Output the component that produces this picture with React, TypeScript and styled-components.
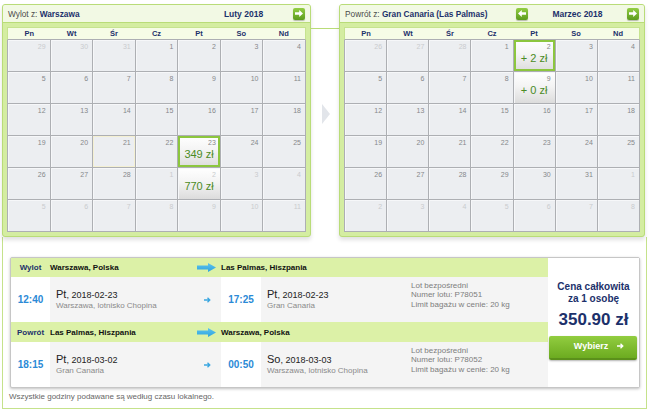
import React from "react";
import styled, { createGlobalStyle, css } from "styled-components";

const NAVY = "#1c316b";
const FRAME = "#b9dc78";
const GRID_LINE = "#adafb3";

const GlobalStyle = createGlobalStyle`
  html, body { margin: 0; padding: 0; background: #fff; }
  body { font-family: "Liberation Sans", Arial, sans-serif; }
  * { box-sizing: border-box; }
`;

interface Day {
  n: number;
  muted?: boolean;
  price?: string;
  selected?: boolean;
  today?: boolean;
}

// 42 pól: koniec poprzedniego miesiąca, bieżący, początek następnego
const buildMonth = (prevTail: number[], days: number): Day[] => {
  const list: Day[] = prevTail.map((n) => ({ n, muted: true }));
  for (let i = 1; i <= days; i++) list.push({ n: i });
  let next = 1;
  while (list.length < 42) list.push({ n: next++, muted: true });
  return list;
};

const febDays = buildMonth([29, 30, 31], 28).map((d, i) => {
  if (!d.muted && d.n === 21) return { ...d, today: true };
  if (!d.muted && d.n === 23) return { ...d, price: "349 zł", selected: true };
  if (d.muted && i > 20 && d.n === 2) return { ...d, price: "770 zł" };
  return d;
});

const marDays = buildMonth([26, 27, 28], 31).map((d) => {
  if (!d.muted && d.n === 2) return { ...d, price: "+ 2 zł", selected: true };
  if (!d.muted && d.n === 9) return { ...d, price: "+ 0 zł" };
  return d;
});

const WEEK = ["Pn", "Wt", "Śr", "Cz", "Pt", "So", "Nd"];

const Page = styled.div`
  width: 650px;
  height: 411px;
  overflow: hidden;
  color: #222;
`;

const TopRow = styled.div`
  display: flex;
  padding: 4px 0 0 2px;
`;

const Panel = styled.div<{ $width: number }>`
  width: ${({ $width }) => $width}px;
  border: 1px solid ${FRAME};
  border-radius: 3px;
  background: #d4eda1;
  box-shadow: 0 3px 4px rgba(0, 0, 0, 0.12);
  overflow: hidden;
`;

const PanelHeader = styled.div`
  height: 18px;
  display: flex;
  align-items: center;
  padding: 0 5px 0 5px;
  background: #f2f9e4;
  border-bottom: 1px solid ${FRAME};
`;

const PanelTitle = styled.div`
  flex: 1;
  font-size: 8.3px;
  color: #4a4a4a;
  white-space: nowrap;
  b {
    color: ${NAVY};
  }
`;

const MonthNav = styled.div`
  display: flex;
  align-items: center;
`;

const MonthLabel = styled.div`
  width: 99px;
  text-align: center;
  font-size: 8.5px;
  font-weight: bold;
  color: ${NAVY};
`;

const NavButton = styled.div<{ $hidden?: boolean }>`
  width: 12px;
  height: 12px;
  border-radius: 2px;
  background: linear-gradient(#93ce45, #5c9b1d);
  box-shadow: 0 1px 1px rgba(0, 0, 0, 0.25);
  display: flex;
  align-items: center;
  justify-content: center;
  visibility: ${({ $hidden }) => ($hidden ? "hidden" : "visible")};
`;

const PanelBody = styled.div`
  padding: 4px 4px 4px 4px;
`;

const WeekRow = styled.div`
  display: grid;
  grid-template-columns: repeat(7, 1fr);
  height: 13px;
  background: #f6fce6;
  border: 1px solid #c6e38f;
  border-bottom: 1px solid ${GRID_LINE};
`;

const WeekDay = styled.div`
  font-size: 7.5px;
  font-weight: bold;
  color: ${NAVY};
  text-align: center;
  line-height: 12px;
`;

const DaysGrid = styled.div`
  display: grid;
  grid-template-columns: repeat(7, 1fr);
  grid-auto-rows: 32px;
  border-left: 1px solid ${GRID_LINE};
  background: #eceef1;
`;

const Cell = styled.div<{ $priced?: boolean; $selected?: boolean; $today?: boolean }>`
  position: relative;
  border-right: 1px solid ${GRID_LINE};
  border-bottom: 1px solid ${GRID_LINE};
  background: #eceef1;
  box-shadow: inset 1px 1px 0 #f6f7f9;
  ${({ $priced }) =>
    $priced &&
    css`
      background: linear-gradient(#ffffff 0%, #f4f4f4 45%, #dcdcdc 100%);
    `}
  ${({ $today }) =>
    $today &&
    css`
      box-shadow: inset 0 0 0 1px #f4f0d2;
    `}
  ${({ $selected }) =>
    $selected &&
    css`
      box-shadow: inset 0 0 0 2px #8cc63e;
    `}
`;

const DayNum = styled.div<{ $muted?: boolean }>`
  text-align: right;
  padding: 3px 4px 0 0;
  font-size: 7px;
  line-height: 8px;
  color: ${({ $muted }) => ($muted ? "#c9cbce" : "#86888b")};
`;

const Price = styled.div`
  text-align: center;
  font-size: 11px;
  line-height: 13px;
  margin-top: 1px;
  color: #4b8b25;
`;

const Gutter = styled.div`
  width: 28px;
  display: flex;
  flex-direction: column;
`;

const Connector = styled.div`
  height: 1px;
  margin-top: 24px;
  background: ${FRAME};
`;

const Chevron = styled.div`
  width: 0;
  height: 0;
  margin: 75px 0 0 11px;
  border-left: 8px solid #e2e5ea;
  border-top: 10px solid transparent;
  border-bottom: 10px solid transparent;
`;

const Lower = styled.div`
  margin-left: 2px;
  width: 645px;
  border: 1px solid #c5e28b;
  border-top: none;
  padding: 20px 6px 6px 7px;
`;

const FlightBox = styled.div`
  display: flex;
  border: 1px solid #c6c6c6;
  border-radius: 2px;
  box-shadow: 0 1px 3px rgba(0, 0, 0, 0.25);
  background: #fff;
`;

const Legs = styled.div`
  width: 537px;
`;

const LegHeader = styled.div<{ $h: number }>`
  height: ${({ $h }) => $h}px;
  display: flex;
  align-items: center;
  background: #dcf1a7;
  font-size: 8px;
  font-weight: bold;
  color: #111;
`;

const LegLabel = styled.div`
  width: 39px;
  text-align: center;
  color: ${NAVY};
`;

const LegFrom = styled.div`
  width: 171px;
  display: flex;
  align-items: center;
  justify-content: space-between;
  padding-right: 5px;
`;

const LegBody = styled.div<{ $h: number }>`
  height: ${({ $h }) => $h}px;
  display: flex;
`;

const Time = styled.div`
  width: 39px;
  display: flex;
  align-items: center;
  justify-content: center;
  font-size: 10px;
  font-weight: bold;
  color: #2b8ad6;
`;

const TimeTo = styled(Time)`
  width: 40px;
`;

const Stop = styled.div<{ $width: number }>`
  width: ${({ $width }) => $width}px;
  background: #f4f4f4;
  display: flex;
  align-items: center;
  justify-content: space-between;
  padding: 0 10px 0 6px;
`;

const StopText = styled.div`
  display: flex;
  flex-direction: column;
`;

const DateLine = styled.div`
  font-size: 9px;
  line-height: 11px;
  color: #222;
  span {
    font-size: 11px;
  }
`;

const Place = styled.div`
  font-size: 8px;
  line-height: 10px;
  color: #8a8a8a;
`;

const Info = styled.div`
  flex: 1;
  background: #f4f4f4;
  padding: 4px 0 0 5px;
  font-size: 8px;
  line-height: 9.3px;
  color: #7d7d7d;
`;

const PriceBox = styled.div`
  flex: 1;
  display: flex;
  flex-direction: column;
  align-items: center;
  padding-top: 23px;
  background: #fff;
`;

const PriceCaption = styled.div`
  font-size: 10px;
  line-height: 12px;
  font-weight: bold;
  color: ${NAVY};
  text-align: center;
`;

const Total = styled.div`
  margin-top: 5px;
  font-size: 17px;
  line-height: 20px;
  font-weight: bold;
  color: ${NAVY};
`;

const ChooseButton = styled.div`
  margin: 6px 2px 0 1px;
  align-self: stretch;
  height: 24px;
  display: flex;
  align-items: center;
  justify-content: center;
  gap: 9px;
  padding: 0 0 2px 12px;
  border-radius: 2px;
  background: linear-gradient(#92cd40, #6cab20);
  border-bottom: 2px solid #5b901b;
  box-shadow: 0 1px 2px rgba(0, 0, 0, 0.3);
  color: #fff;
  font-size: 9px;
  font-weight: bold;
`;

const Footnote = styled.div`
  margin: 4px 0 0 -1px;
  font-size: 8px;
  line-height: 10px;
  color: #666;
`;

const NavArrow = ({ left }: { left?: boolean }) => (
  <svg width="8" height="7" viewBox="0 0 8 7" style={left ? { transform: "scaleX(-1)" } : undefined}>
    <path d="M0 2.3h4.2V0L8 3.5 4.2 7V4.7H0z" fill="#fff" />
  </svg>
);

const SmallArrow = ({ color }: { color: string }) => (
  <svg width="7" height="6" viewBox="0 0 7 6">
    <path d="M0 3h5.5M3.5 0.8 5.8 3 3.5 5.2" stroke={color} strokeWidth="1.3" fill="none" />
  </svg>
);

const BlockArrow = () => (
  <svg width="19" height="9" viewBox="0 0 19 9">
    <defs>
      <linearGradient id="ba" x1="0" y1="0" x2="0" y2="1">
        <stop offset="0" stopColor="#5cc4f0" />
        <stop offset="1" stopColor="#2ea3dc" />
      </linearGradient>
    </defs>
    <path d="M0 2.4h11V0l8 4.5-8 4.5V6.6H0z" fill="url(#ba)" />
  </svg>
);

interface CalendarProps {
  width: number;
  label: React.ReactNode;
  month: string;
  showPrev?: boolean;
  days: Day[];
}

const Calendar = ({ width, label, month, showPrev, days }: CalendarProps) => (
  <Panel $width={width}>
    <PanelHeader>
      <PanelTitle>{label}</PanelTitle>
      <MonthNav>
        <NavButton $hidden={!showPrev}>
          <NavArrow left />
        </NavButton>
        <MonthLabel>{month}</MonthLabel>
        <NavButton>
          <NavArrow />
        </NavButton>
      </MonthNav>
    </PanelHeader>
    <PanelBody>
      <WeekRow>
        {WEEK.map((w) => (
          <WeekDay key={w}>{w}</WeekDay>
        ))}
      </WeekRow>
      <DaysGrid>
        {days.map((d, i) => (
          <Cell key={i} $priced={!!d.price} $selected={d.selected} $today={d.today}>
            <DayNum $muted={d.muted}>{d.n}</DayNum>
            {d.price && <Price>{d.price}</Price>}
          </Cell>
        ))}
      </DaysGrid>
    </PanelBody>
  </Panel>
);

interface LegProps {
  label: string;
  from: string;
  to: string;
  headH: number;
  bodyH: number;
  depTime: string;
  depDay: string;
  depDate: string;
  depPlace: string;
  arrTime: string;
  arrDay: string;
  arrDate: string;
  arrPlace: string;
  flightNo: string;
}

const Leg = (p: LegProps) => (
  <>
    <LegHeader $h={p.headH}>
      <LegLabel>{p.label}</LegLabel>
      <LegFrom>
        {p.from}
        <BlockArrow />
      </LegFrom>
      <div>{p.to}</div>
    </LegHeader>
    <LegBody $h={p.bodyH}>
      <Time>{p.depTime}</Time>
      <Stop $width={171}>
        <StopText>
          <DateLine>
            <span>{p.depDay}</span>, {p.depDate}
          </DateLine>
          <Place>{p.depPlace}</Place>
        </StopText>
        <SmallArrow color="#3aa6e0" />
      </Stop>
      <TimeTo>{p.arrTime}</TimeTo>
      <Stop $width={145}>
        <StopText>
          <DateLine>
            <span>{p.arrDay}</span>, {p.arrDate}
          </DateLine>
          <Place>{p.arrPlace}</Place>
        </StopText>
      </Stop>
      <Info>
        Lot bezpośredni
        <br />
        Numer lotu: {p.flightNo}
        <br />
        Limit bagażu w cenie: 20 kg
      </Info>
    </LegBody>
  </>
);

export default function App() {
  return (
    <Page>
      <GlobalStyle />
      <TopRow>
        <Calendar
          width={309}
          label={
            <>
              Wylot z: <b>Warszawa</b>
            </>
          }
          month="Luty 2018"
          days={febDays}
        />
        <Gutter>
          <Connector />
          <Chevron />
        </Gutter>
        <Calendar
          width={306}
          label={
            <>
              Powrót z: <b>Gran Canaria (Las Palmas)</b>
            </>
          }
          month="Marzec 2018"
          showPrev
          days={marDays}
        />
      </TopRow>
      <Lower>
        <FlightBox>
          <Legs>
            <Leg
              label="Wylot"
              from="Warszawa, Polska"
              to="Las Palmas, Hiszpania"
              headH={19}
              bodyH={45}
              depTime="12:40"
              depDay="Pt"
              depDate="2018-02-23"
              depPlace="Warszawa, lotnisko Chopina"
              arrTime="17:25"
              arrDay="Pt"
              arrDate="2018-02-23"
              arrPlace="Gran Canaria"
              flightNo="P78051"
            />
            <Leg
              label="Powrót"
              from="Las Palmas, Hiszpania"
              to="Warszawa, Polska"
              headH={20}
              bodyH={45}
              depTime="18:15"
              depDay="Pt"
              depDate="2018-03-02"
              depPlace="Gran Canaria"
              arrTime="00:50"
              arrDay="So"
              arrDate="2018-03-03"
              arrPlace="Warszawa, lotnisko Chopina"
              flightNo="P78052"
            />
          </Legs>
          <PriceBox>
            <PriceCaption>
              Cena całkowita
              <br />
              za 1 osobę
            </PriceCaption>
            <Total>350.90 zł</Total>
            <ChooseButton>
              Wybierz
              <SmallArrow color="#fff" />
            </ChooseButton>
          </PriceBox>
        </FlightBox>
        <Footnote>Wszystkie godziny podawane są według czasu lokalnego.</Footnote>
      </Lower>
    </Page>
  );
}
